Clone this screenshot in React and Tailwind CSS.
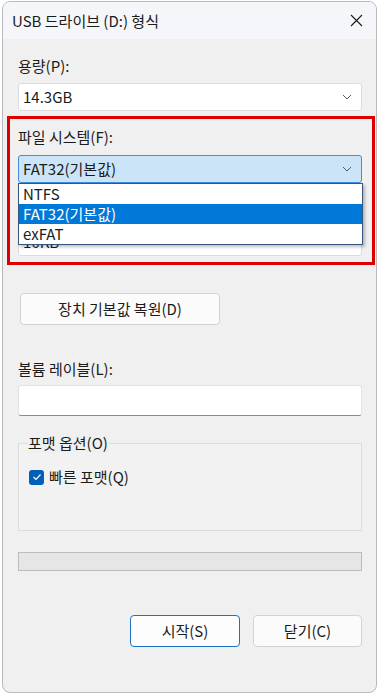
import React from "react";

function Chevron() {
  return (
    <svg width="10" height="6" viewBox="0 0 10 6" className="shrink-0">
      <polyline points="1,1 5,5 9,1" fill="none" stroke="#5c5c5c" strokeWidth="1" />
    </svg>
  );
}

function Select({ value, active }) {
  return (
    <div
      className={
        "h-[28px] rounded-[3px] border flex items-center justify-between pl-[4px] pr-[9px] " +
        (active ? "bg-[#cce4f7] border-[#3d8ee0]" : "bg-white border-[#dcdcdc]")
      }
    >
      <span>{value}</span>
      <Chevron />
    </div>
  );
}

export default function App() {
  return (
    <div className="w-[379px] h-[695px] bg-white pt-[1px] pl-[2px] text-[15px] leading-[20px] text-[#1b1b1b] font-['Noto_Sans_CJK_KR','Noto_Sans',sans-serif]">
      {/* dialog window */}
      <div className="w-[375px] h-[692px] rounded-[8px] border border-[#b9b9b9] bg-[#f0f0f0] overflow-hidden flex flex-col">
        {/* title bar */}
        <div className="h-[37px] shrink-0 bg-[#f4f6f9] flex items-center justify-between pl-[9px] pr-[13px]">
          <span>USB 드라이브 (D:) 형식</span>
          <svg width="13" height="13" viewBox="0 0 13 13">
            <path d="M1 1 L12 12 M12 1 L1 12" stroke="#1b1b1b" strokeWidth="1.1" />
          </svg>
        </div>

        <div className="flex flex-col pl-[15px] pr-[14px] pt-[17px]">
          <div>용량(P):</div>
          <div className="mt-[7px]">
            <Select value="14.3GB" />
          </div>

          {/* file system section */}
          <div className="relative mt-[16px]">
            <div className="absolute -top-[11px] -bottom-[9px] -left-[11px] -right-[13px] border-[3px] border-[#dd0000] pointer-events-none z-20" />
            <div>파일 시스템(F):</div>
            <div className="relative mt-[8px]">
              <Select value="FAT32(기본값)" active />
              <div className="absolute top-full left-0 -right-[1px] z-10 bg-white border border-[#34567e] shadow-[2px_2px_3px_rgba(0,0,0,0.25)]">
                <div className="h-[20px] pl-[4px] flex items-center">NTFS</div>
                <div className="h-[20px] pl-[4px] flex items-center bg-[#0078d7] text-white">FAT32(기본값)</div>
                <div className="h-[20px] pl-[4px] flex items-center">exFAT</div>
              </div>
            </div>
            <div className="mt-[17px] invisible">할당 단위 크기(A):</div>
            <div className="mt-[8px]">
              <Select value="16KB" />
            </div>
          </div>

          <button className="mt-[37px] w-[200px] h-[32px] ml-[2px] rounded-[4px] border border-[#d3d3d3] bg-[#fbfbfb] text-center">
            장치 기본값 복원(D)
          </button>

          <div className="mt-[34px]">볼륨 레이블(L):</div>
          <div className="mt-[6px] h-[31px] bg-white rounded-[3px] border border-[#e3e3e3] border-b-[#8a8a8a]" />

          {/* format options group */}
          <div className="relative mt-[27px] h-[88px] border border-[#dcdcdc] bg-[#f2f2f2] pl-[10px] pt-[23px]">
            <span className="absolute -top-[11px] left-[8px] px-[1px] bg-[#f0f0f0]">포맷 옵션(O)</span>
            <div className="flex items-center gap-[5px]">
              <span className="w-[15px] h-[15px] rounded-[3px] bg-[#005fb8] flex items-center justify-center">
                <svg width="10" height="8" viewBox="0 0 10 8">
                  <polyline points="1.5,4 4,6.5 8.5,1.5" fill="none" stroke="white" strokeWidth="1.2" />
                </svg>
              </span>
              <span>빠른 포맷(Q)</span>
            </div>
          </div>

          <div className="mt-[21px] h-[19px] bg-[#e6e6e6] border border-[#bcbcbc]" />

          <div className="mt-[44px] flex justify-end gap-[13px]">
            <button className="w-[110px] h-[32px] rounded-[4px] border border-[#1a73c9] bg-[#fdfdfd]">시작(S)</button>
            <button className="w-[109px] h-[32px] rounded-[4px] border border-[#d3d3d3] bg-[#fbfbfb]">닫기(C)</button>
          </div>
        </div>
      </div>
    </div>
  );
}
